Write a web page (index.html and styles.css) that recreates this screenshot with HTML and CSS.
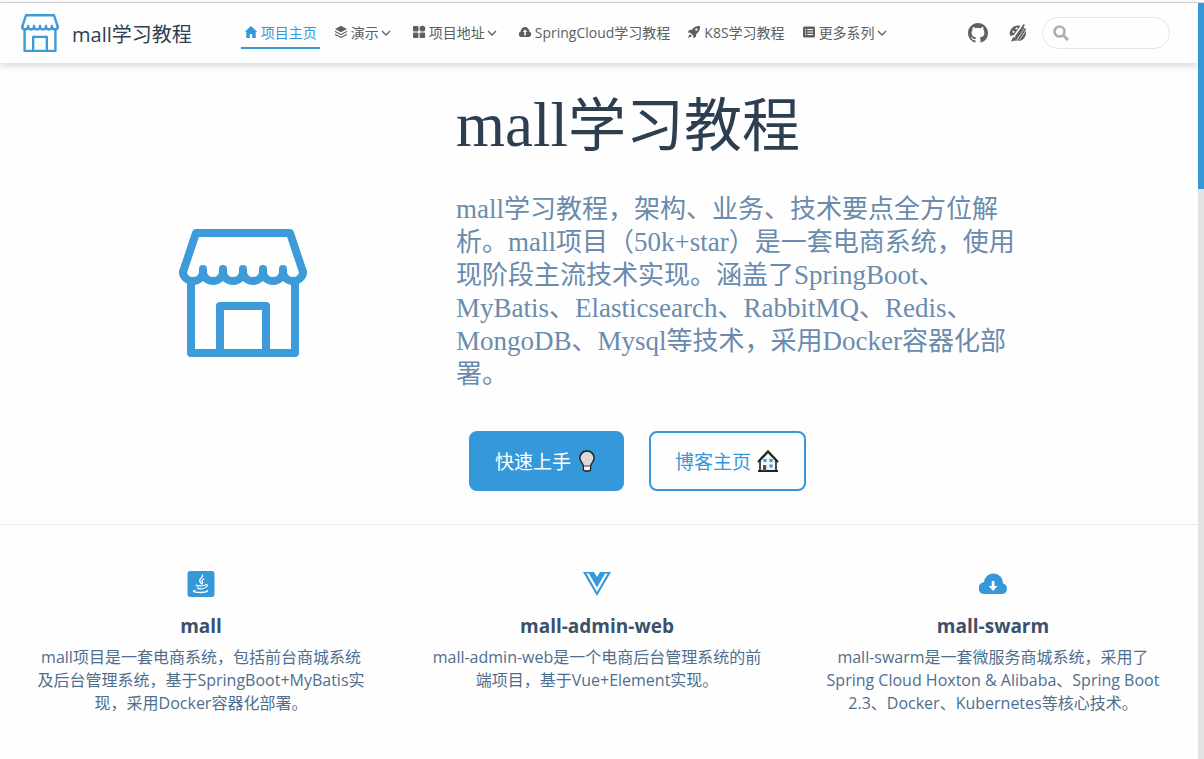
FILE: index.html
```
<!DOCTYPE html>
<html lang="zh-CN">
<head>
<meta charset="utf-8">
<meta name="viewport" content="width=device-width, initial-scale=1">
<title>mall学习教程</title>
<link rel="stylesheet" href="styles.css">
</head>
<body>
<svg class="defs" aria-hidden="true">
  <symbol id="shop" viewBox="0 0 128 128">
    <g fill="none" stroke="currentColor" stroke-width="8" stroke-linecap="round" stroke-linejoin="round">
      <path d="M4 43 17 4h94l13 39"/>
      <path d="M4 43a10 9 0 0 0 20 0v-3 3a10 9 0 0 0 20 0v-3 3a10 9 0 0 0 20 0v-3 3a10 9 0 0 0 20 0v-3 3a10 9 0 0 0 20 0v-3 3a10 9 0 0 0 20 0"/>
      <path d="M12 54v70h104V54M41 123V77h46v46"/>
    </g>
  </symbol>
  <symbol id="chevron" viewBox="0 0 10 10"><path d="m1 3 4 4 4-4" fill="none" stroke="currentColor" stroke-width="1.3"/></symbol>
</svg>
<div class="shell">
  <div class="page">
    <header class="navbar">
      <a class="brand" href="#"><svg class="brand-logo"><use href="#shop"/></svg><span>mall学习教程</span></a>
      <nav class="links">
        <a class="link active" href="#"><svg class="icon" viewBox="0 0 14 14"><path d="M7 1 .8 6.8h1.500V13h3.400V9h2.600v4h3.400V6.800h1.500z"/></svg>项目主页</a>
        <button class="link" type="button"><svg class="icon" viewBox="0 0 14 14"><path d="M7 .8 13 4 7 7.200 1 4zM1 5.800l6 3.100 6-3.100v1.300l-6 3.100-6-3.100zM1 8.700l6 3.100 6-3.100V10l-6 3.100L1 10z"/></svg>演示<svg class="chev"><use href="#chevron"/></svg></button>
        <button class="link" type="button"><svg class="icon" viewBox="0 0 14 14"><rect x="1" y="1" width="5.5" height="5.5" rx="1"/><circle cx="10.4" cy="3.7" r="2.9"/><rect x="1" y="7.5" width="5.5" height="5.5" rx="1"/><rect x="7.6" y="7.5" width="5.5" height="5.5" rx="1"/></svg>项目地址<svg class="chev"><use href="#chevron"/></svg></button>
        <a class="link" href="#"><svg class="icon" viewBox="0 0 14 14"><path fill-rule="evenodd" d="M3 12a2.800 2.800 0 0 1-.3-5.400A4.400 4.400 0 0 1 7 2a4.400 4.400 0 0 1 4.300 4.600A2.800 2.800 0 0 1 11 12zM6.200 10.500h1.600V7h1.500L7 4.500 4.700 7h1.500z"/></svg>SpringCloud学习教程</a>
        <a class="link" href="#"><svg class="icon" viewBox="0 0 14 14"><path fill-rule="evenodd" d="M13 1C9 .8 6.800 2 5 4.700L2.200 5 .8 7.500l2.500.2 3 3 .2 2.500L9 11.800 9.300 9C12 7.200 13.200 5 13 1zM9.400 3.400a1.200 1.200 0 1 1 0 2.400 1.200 1.200 0 0 1 0-2.400zM2.800 9 .9 13.100 5 11.200z"/></svg>K8S学习教程</a>
        <button class="link" type="button"><svg class="icon" viewBox="0 0 14 14"><path fill-rule="evenodd" d="M2.500 1.500h9A1.500 1.500 0 0 1 13 3v8a1.500 1.500 0 0 1-1.500 1.500h-9A1.500 1.500 0 0 1 1 11V3a1.500 1.500 0 0 1 1.500-1.500zM3 4v1h1.300V4zm2.500 0v1H11V4zM3 6.500v1h1.300v-1zm2.500 0v1H11v-1zM3 9v1h1.300V9zm2.500 0v1H11V9z"/></svg>更多系列<svg class="chev"><use href="#chevron"/></svg></button>
      </nav>
      <div class="tools">
        <a class="tool" href="#" aria-label="GitHub"><svg viewBox="0 0 16 16"><path d="M8 0C3.580 0 0 3.580 0 8c0 3.540 2.290 6.530 5.470 7.590.4.07.55-.17.55-.38 0-.19-.01-.82-.01-1.490-2.010.37-2.530-.49-2.690-.94-.09-.23-.48-.94-.82-1.130-.28-.15-.68-.52-.01-.53.63-.01 1.080.58 1.230.82.72 1.210 1.870.87 2.330.66.07-.52.28-.87.51-1.070-1.780-.2-3.640-.89-3.640-3.950 0-.87.31-1.590.82-2.150-.08-.2-.36-1.020.08-2.120 0 0 .67-.21 2.200.82a7.600 7.600 0 0 1 4 0c1.530-1.040 2.200-.82 2.200-.82.44 1.100.16 1.920.08 2.120.51.56.82 1.270.82 2.150 0 3.070-1.870 3.750-3.650 3.950.29.25.54.73.54 1.480 0 1.070-.01 1.930-.01 2.200 0 .21.15.46.55.38A8.010 8.010 0 0 0 16 8c0-4.420-3.580-8-8-8z"/></svg></a>
        <button class="tool" type="button" aria-label="主题"><svg viewBox="0 0 20 20"><path d="M9.500 2.500A8 8 0 0 0 2 12.500c1.500.6 2.800-.2 4-.2 1.500 0 2 1.500 1.300 3L6.500 17.500c2.500.8 6 .8 8-.8 4-3 4.500-8.500 1.800-12A9 9 0 0 0 9.500 2.500z"/><g fill="#fff"><circle cx="5.500" cy="8.800" r="1.100"/><circle cx="8.500" cy="5.500" r="1.100"/></g><path d="M15.500 1 5.500 15M18 5 9.500 18" fill="none" stroke="#fff" stroke-width="2.800"/><path d="M16.300 1.500 7.500 14M17.500 5.500 10 17.500" fill="none" stroke="currentColor" stroke-width="1.600"/><path d="M6.500 13.800c1.500.5 1.500 2 .6 3-1 1.300-2.600 1.700-4.400 1.500 1.600-1 1.300-3.700 3.800-4.500z"/></svg></button>
        <label class="search"><svg viewBox="0 0 16 16"><circle cx="6.500" cy="6.500" r="5" fill="none" stroke="currentColor" stroke-width="2.600"/><path d="m10 10 5 5" stroke="currentColor" stroke-width="3"/></svg><input type="search" aria-label="搜索"></label>
      </div>
    </header>
    <main>
      <section class="hero">
        <svg class="hero-logo" role="img" aria-label="mall"><use href="#shop"/></svg>
        <div class="hero-info">
          <h1><span class="latin">mall</span>学习教程</h1>
          <p class="intro"><span class="latin">mall</span>学习教程，架构、业务、技术要点全方位解<br>析。<span class="latin">mall</span>项目（<span class="latin">50k+star</span>）是一套电商系统，使用<br>现阶段主流技术实现。涵盖了<span class="latin">SpringBoot</span>、<br><span class="latin">MyBatis</span>、<span class="latin">Elasticsearch</span>、<span class="latin">RabbitMQ</span>、<span class="latin">Redis</span>、<br><span class="latin">MongoDB</span>、<span class="latin">Mysql</span>等技术，采用<span class="latin">Docker</span>容器化部<br>署。</p>
          <div class="actions">
            <a class="action primary" href="#">快速上手<svg viewBox="0 0 24 24"><path d="M12 1.200c-4.600 0-7.800 3.300-7.800 7.600 0 3.600 3.300 5.200 4 9v3.400a1.800 1.800 0 0 0 1.800 1.800h4a1.800 1.800 0 0 0 1.800-1.800v-3.400c.7-3.800 4-5.400 4-9 0-4.300-3.200-7.600-7.800-7.600z" fill="#d9d9d9" stroke="#222" stroke-width="1.600"/><path d="M9 17.500h6v4H9z" fill="#fff"/><path d="M9 17.500h6" stroke="#222" stroke-width="1"/></svg></a>
            <a class="action secondary" href="#">博客主页<svg viewBox="0 0 24 24"><path d="M4 11v11h16V11l-8-8.500z" fill="#f3f3f3" stroke="#222" stroke-width="1.600"/><path d="M2 13 12 2.500 22 13M2 22h20" fill="none" stroke="#222" stroke-width="2.200"/><path d="M7.500 10h3v3h-3zm6 0h3v3h-3zm0 5.500h3v3h-3z" fill="#3498db"/><path d="M7 16h3.200v6H7z" fill="#5b4a43"/></svg></a>
          </div>
        </div>
      </section>
      <section class="features">
        <article class="feature">
          <svg class="feature-icon" viewBox="0 0 28 28"><rect x=".5" y="1" width="27" height="26" rx="3"/><g fill="none" stroke="#fff" stroke-linecap="round"><path d="M15.500 5c1 2.500-3.500 3.500-2.800 6 .2.900 1 1.500 1.300 2.500M17 9c-2 .8-2.500 2-1.500 3.300.5.800 0 1.300-.5 1.700" stroke-width="1.300"/><path d="M9.500 15c-1.500 1 5.500 1.200 8.500.3M18.500 14.500c3-.5 2 2.500-.5 3M10.500 18c1.500 1 4.500.9 6.500.2" stroke-width="1.200"/><path d="M8 20.500c-5 1.500 3.500 2.300 8 1.800 3-.3 5-1 4-1.800" stroke-width="1.400"/></g></svg>
          <h2>mall</h2>
          <p>mall项目是一套电商系统，包括前台商城系统<br>及后台管理系统，基于SpringBoot+MyBatis实<br>现，采用Docker容器化部署。</p>
        </article>
        <article class="feature">
          <svg class="feature-icon" viewBox="0 0 28 28"><path d="M0 2h11l3 5 3-5h11L14 26z"/><path d="M3.400 3.500h2.500L14 17.500l8.100-14h2.500L14 22z" fill="#fff"/></svg>
          <h2>mall-admin-web</h2>
          <p>mall-admin-web是一个电商后台管理系统的前<br>端项目，基于Vue+Element实现。</p>
        </article>
        <article class="feature">
          <svg class="feature-icon" viewBox="0 0 28 28"><path d="M5.500 24A5.700 5.700 0 0 1 5 12.300 9.500 9.500 0 0 1 24 13.500 5.400 5.400 0 0 1 23.500 24z"/><path d="M12.700 11h2.800v5h3L14.100 21l-4.400-5h3z" fill="#fff"/></svg>
          <h2>mall-swarm</h2>
          <p>mall-swarm是一套微服务商城系统，采用了<br>Spring Cloud Hoxton &amp; Alibaba、Spring Boot<br>2.3、Docker、Kubernetes等核心技术。</p>
        </article>
      </section>
    </main>
  </div>
  <div class="scroll-track" aria-hidden="true"><div class="scroll-thumb"></div></div>
</div>
</body>
</html>
```
FILE: styles.css
```
* { box-sizing: border-box; }
body {
  margin: 0;
  background: #fefefe;
  color: #2c3e50;
  font-family: "Open Sans", "Noto Sans CJK SC", sans-serif;
}
a { color: inherit; text-decoration: none; }
button { border: 0; background: none; font: inherit; color: inherit; }
svg { fill: currentColor; flex: none; }
.defs { display: none; }

.shell {
  display: flex;
  min-height: 100vh;
  padding-top: 3px;
  background: linear-gradient(#d8dadb, #d8dadb) 0 2px / 100% 1px no-repeat;
}
.page { flex: 1; min-width: 0; }
.scroll-track { width: 6px; background: #e3e3e3; }
.scroll-thumb { height: 186px; background: #3498db; }

.navbar {
  display: flex;
  align-items: center;
  height: 60px;
  padding: 0 28px 0 21px;
  background: #fefefe;
  box-shadow: 0 2px 8px rgba(0, 0, 0, 0.18);
}
.brand { display: flex; align-items: center; gap: 13px; font-size: 20px; white-space: nowrap; }
.brand-logo { width: 38px; height: 38px; color: #3e9bd9; }
.links { display: flex; gap: 11px; margin-left: 49px; color: #5c6063; font-size: 14px; white-space: nowrap; }
.link { display: flex; align-items: center; height: 32px; padding: 0 3px; border-bottom: 2px solid transparent; }
.link.active { color: #3498db; border-color: #3498db; }
.icon { width: 14px; height: 14px; margin-right: 3px; }
.chev { width: 10px; height: 10px; margin: 2px 4px 0 2px; }
.tools { display: flex; align-items: center; gap: 20px; margin-left: auto; color: #5e6265; }
.tool { display: flex; padding: 0; }
.tool svg { width: 20px; height: 20px; }
.search { display: flex; align-items: center; width: 128px; height: 32px; margin-left: -6px; padding: 0 10px; border: 1px solid #e6e6e6; border-radius: 16px; color: #aaafb3; }
.search svg { width: 16px; height: 16px; }
.search input { flex: 1; min-width: 0; border: 0; outline: 0; background: none; font: inherit; }

.hero {
  display: grid;
  grid-template-columns: 312px 1fr;
  gap: 57px;
  align-items: center;
  max-width: 1024px;
  margin: 0 auto;
  padding: 28px 0 33px;
}
.hero-logo { width: 128px; height: 128px; margin-top: 4px; justify-self: center; color: #3e9bd9; }
.hero-info { font-family: "Liberation Serif", "Noto Sans CJK SC", serif; }
.hero h1 { margin: 0; font-size: 58px; line-height: 68px; font-weight: 400; white-space: nowrap; }
h1 .latin { font-size: 63px; }
.intro { margin: 32px 0 40px; color: #6a8bad; font-size: 26px; line-height: 33px; white-space: nowrap; }
.intro .latin { font-size: 27px; line-height: 1; }
.actions { display: flex; gap: 25px; padding-left: 13px; font-family: "Open Sans", "Noto Sans CJK SC", sans-serif; }
.action { display: flex; align-items: center; gap: 5px; height: 60px; padding: 0 24px; border: 2px solid #3498db; border-radius: 8px; color: #3498db; font-size: 19px; }
.action svg { width: 22px; height: 22px; }
.action.secondary svg { width: 24px; height: 24px; }
.action.primary { background: #3498db; color: #fff; }

.features { display: grid; grid-template-columns: repeat(3, 1fr); padding: 45px 7px 45px 3px; border-top: 1px solid #eaecef; }
.feature { text-align: center; white-space: nowrap; }
.feature-icon { display: block; width: 28px; height: 28px; margin: 0 auto; color: #3498db; }
.feature h2 { margin: 16px 0 8px; color: #3a5169; font-size: 19px; line-height: 24px; font-weight: 700; }
.feature p { margin: 0; color: #4e6e8e; font-size: 16px; line-height: 23px; }
```
